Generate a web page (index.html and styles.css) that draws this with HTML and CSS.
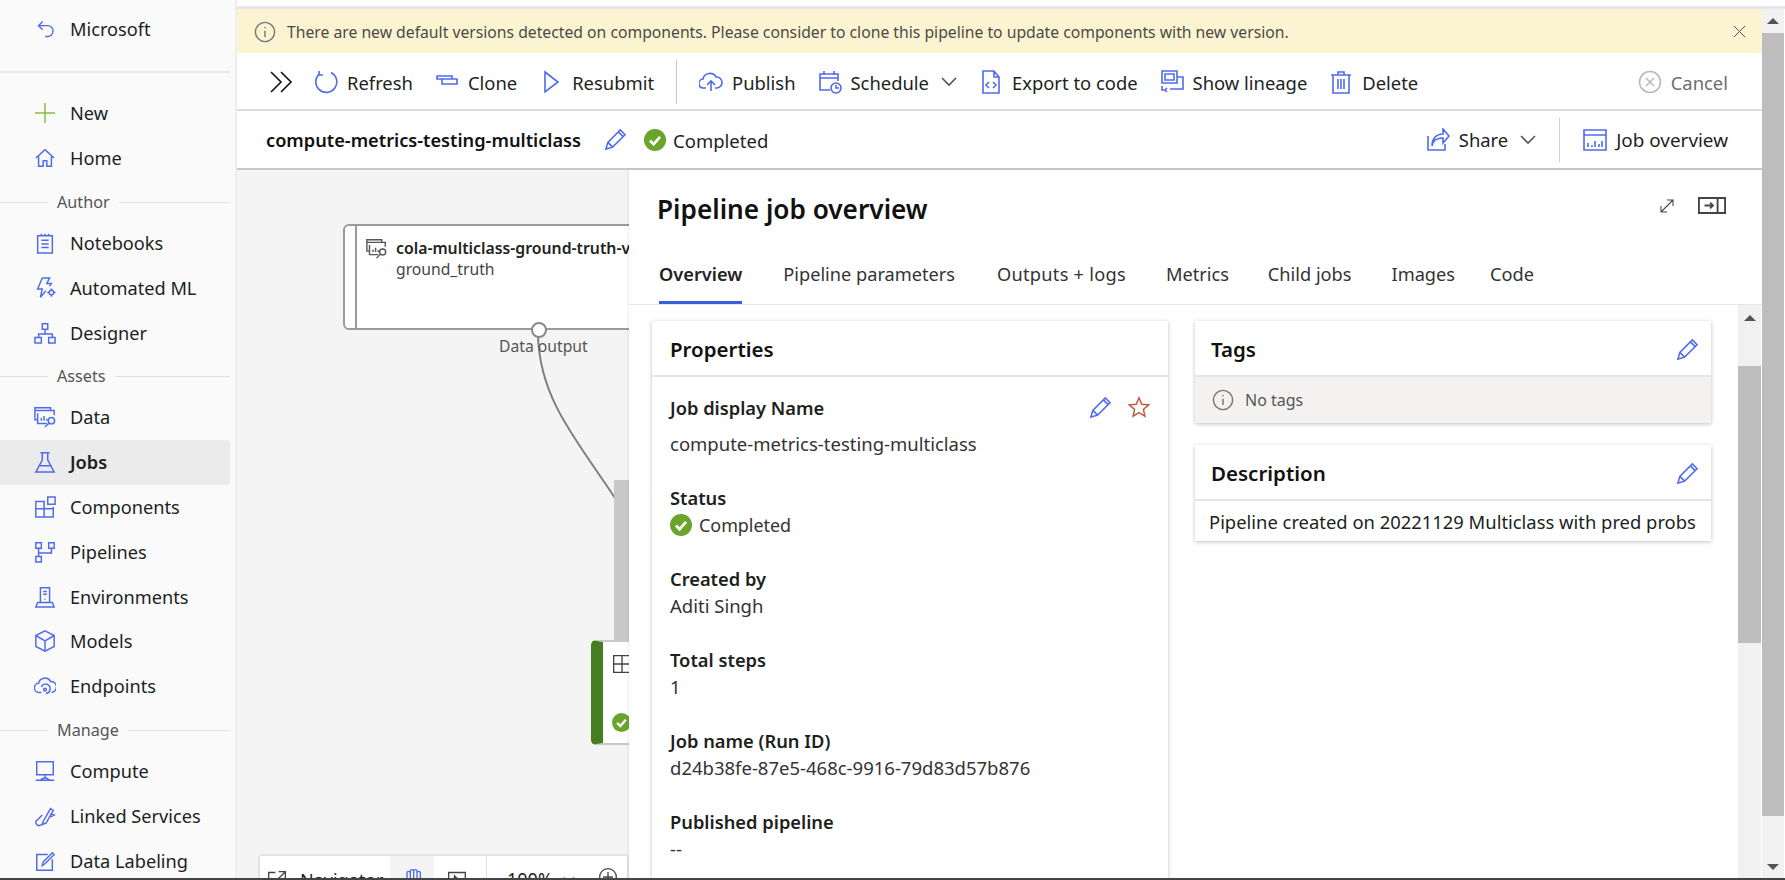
FILE: index.html
```html
<!DOCTYPE html>
<html lang="en">

<head>
    <meta charset="UTF-8" />
    <title>Pipeline job overview</title>
    <link rel="stylesheet" href="styles.css">
</head>

<body>
    <div class="app">
        <nav class="sidebar">
            <div class="nav-top">
                <svg class="nav-icon" viewBox="0 0 24 24"><path d="M8 3 3 8l5 5M3 8h11a6 6 0 0 1 0 13h-3"/></svg>
                <span>Microsoft</span>
            </div>
            <div class="nav-line"></div>
            <div class="nav-list">
                <div class="nav-item">
                    <svg class="nav-icon plus" viewBox="0 0 24 24"><path d="M12 1v22M1 12h22"/></svg>
                    <span>New</span>
                </div>
                <div class="nav-item">
                    <svg class="nav-icon" viewBox="0 0 24 24"><path d="M2 12 12 3l10 9M5 10v11h5v-6h4v6h5V10"/></svg>
                    <span>Home</span>
                </div>
                <div class="nav-head"><span>Author</span></div>
                <div class="nav-item">
                    <svg class="nav-icon" viewBox="0 0 24 24"><path d="M4 4h16v19H4zM8 2v2M12 2v2M16 2v2M8 9h8M8 13h8M8 17h8"/></svg>
                    <span>Notebooks</span>
                </div>
                <div class="nav-item">
                    <svg class="nav-icon" viewBox="0 0 24 24"><path d="M9 1h8l-3 6h5l-2 3M9 1 4 13h5l-2 9 6-7"/><circle cx="19" cy="17" r="2.500"/><path d="M19 12.500v2M19 19.500v2M14.500 17h2M21.500 17h2"/></svg>
                    <span>Automated ML</span>
                </div>
                <div class="nav-item">
                    <svg class="nav-icon" viewBox="0 0 24 24"><path d="M9 2h6v6H9zM1 17h7v6H1zM16 17h7v6h-7zM12 8v5M5 17v-4h15v4"/></svg>
                    <span>Designer</span>
                </div>
                <div class="nav-head"><span>Assets</span></div>
                <div class="nav-item">
                    <svg class="nav-icon" viewBox="0 0 24 24"><path d="M1 2h17v3H1zM1 5v10h3M4 5h18v5M4 8v11h10M8 16v-3M11 16v-5M14 16v-2"/><circle cx="19" cy="16" r="3.500"/><path d="m16 19-4 4"/></svg>
                    <span>Data</span>
                </div>
                <div class="nav-item active">
                    <svg class="nav-icon" viewBox="0 0 24 24"><path d="M7 2h10M9 2v8L2 23h20L15 10V2M6 16h12"/></svg>
                    <span>Jobs</span>
                </div>
                <div class="nav-item">
                    <svg class="nav-icon" viewBox="0 0 24 24"><path d="M2 6h9v17H2zM2 14h19v9h-10M11 6v8M21 14v-2M15 1h8v8h-8z"/></svg>
                    <span>Components</span>
                </div>
                <div class="nav-item">
                    <svg class="nav-icon" viewBox="0 0 24 24"><path d="M2 2h6v6H2zM16 2h6v6h-6zM2 17h6v6H2zM5 8v9M5 13h14V8"/></svg>
                    <span>Pipelines</span>
                </div>
                <div class="nav-item">
                    <svg class="nav-icon" viewBox="0 0 24 24"><path d="M7 2h10v16H7zM10 6h4M10 9h4M2 23l2-5h16l2 5zM12 14v1"/></svg>
                    <span>Environments</span>
                </div>
                <div class="nav-item">
                    <svg class="nav-icon" viewBox="0 0 24 24"><path d="m12 1 10 5v12l-10 5-10-5V6zM2 6l10 6 10-6M12 12v11"/></svg>
                    <span>Models</span>
                </div>
                <div class="nav-item">
                    <svg class="nav-icon" viewBox="0 0 24 24"><path d="M8 19H6a5 5 0 0 1-1-10 7 7 0 0 1 13-2 6 6 0 0 1 1 12M8 13a5 5 0 1 1 5 7"/><circle cx="12" cy="16" r="1.500"/></svg>
                    <span>Endpoints</span>
                </div>
                <div class="nav-head"><span>Manage</span></div>
                <div class="nav-item">
                    <svg class="nav-icon" viewBox="0 0 24 24"><path d="M3 2h18v14H3zM12 16v4M2 22h20M7 22l3-2h4l3 2"/></svg>
                    <span>Compute</span>
                </div>
                <div class="nav-item">
                    <svg class="nav-icon" viewBox="0 0 24 24"><path d="m10 18 8-14 3 2-8 14-4 1zM9 11l-5 5a3 3 0 0 0 3 6l3-1M18 9l4 2-4 2"/></svg>
                    <span>Linked Services</span>
                </div>
                <div class="nav-item">
                    <svg class="nav-icon" viewBox="0 0 24 24"><path d="M20 10v12H3V5h12M9 17l1-4 10-10 2 2-10 10z"/></svg>
                    <span>Data Labeling</span>
                </div>
            </div>
        </nav>

        <main class="main">
            <div class="top-gap"></div>
            <div class="page-row">
                <div class="page">
                    <div class="banner">
                        <svg class="banner-info" viewBox="0 0 24 24"><circle cx="12" cy="12" r="10.500"/><path d="M12 10.500v7M12 6.500v1.500"/></svg>
                        <span class="banner-text">There are new default versions detected on components. Please consider to clone this pipeline to update components with new version.</span>
                        <svg class="banner-close" viewBox="0 0 24 24"><path d="m3 3 18 18M21 3 3 21"/></svg>
                    </div>

                    <div class="toolbar">
                        <svg class="chevrons" viewBox="0 0 24 24"><path d="m2 2 10 10L2 22M12 2l10 10-10 10"/></svg>
                        <div class="cmd cmd-refresh">
                            <svg class="cmd-icon" viewBox="0 0 24 24"><path d="M6 3.500A10.500 10.500 0 1 0 17 2.500M5 1v4h4"/></svg>
                            <span>Refresh</span>
                        </div>
                        <div class="cmd">
                            <svg class="cmd-icon" viewBox="0 0 24 24"><path d="M2 6h15v3H2zM7 9v5h15V9h-5"/></svg>
                            <span>Clone</span>
                        </div>
                        <div class="cmd">
                            <svg class="cmd-icon" viewBox="0 0 24 24"><path d="m6 2 13 10L6 22z"/></svg>
                            <span>Resubmit</span>
                        </div>
                        <div class="toolbar-sep"></div>
                        <div class="cmd">
                            <svg class="cmd-icon" viewBox="0 0 24 24"><path d="M7 18H5a4.500 4.500 0 0 1-1-9 7 7 0 0 1 13-2 5.500 5.500 0 0 1 1 11h-2M12 21v-9M8 15l4-4 4 4"/></svg>
                            <span>Publish</span>
                        </div>
                        <div class="cmd">
                            <svg class="cmd-icon" viewBox="0 0 24 24"><path d="M12 20H2V4h18v7M2 8h18M6 1v4M16 1v4"/><circle cx="18" cy="18" r="5"/><path d="M18 15v3h3"/></svg>
                            <span>Schedule</span>
                            <svg class="caret" viewBox="0 0 16 10"><path d="m1 1 7 7 7-7"/></svg>
                        </div>
                        <div class="cmd">
                            <svg class="cmd-icon" viewBox="0 0 24 24"><path d="M4 1h11l5 6v16H4zM15 1v6h5M10 12l-3 3 3 3M14 12l3 3-3 3"/></svg>
                            <span>Export to code</span>
                        </div>
                        <div class="cmd">
                            <svg class="cmd-icon" viewBox="0 0 24 24"><path d="M2 1h15v12H2zM5 4h9v6H5zM17 7h6v12H10M2 16v4h3M7 18l-2 2 2 2"/></svg>
                            <span>Show lineage</span>
                        </div>
                        <div class="cmd">
                            <svg class="cmd-icon" viewBox="0 0 24 24"><path d="M4 5h16v18H4zM2 5h20M9 5V2h6v3M9 9v10M12 9v10M15 9v10"/></svg>
                            <span>Delete</span>
                        </div>
                        <div class="cmd cmd-cancel">
                            <svg class="cmd-icon" viewBox="0 0 24 24"><circle cx="12" cy="12" r="10.500"/><path d="m8 8 8 8M16 8l-8 8"/></svg>
                            <span>Cancel</span>
                        </div>
                    </div>

                    <div class="titlebar">
                        <span class="job-title">compute-metrics-testing-multiclass</span>
                        <svg class="pencil title-pencil" viewBox="0 0 24 24"><path d="m2 22 2-7L17 2l5 5L9 20zM4 15l5 5M15 4l5 5"/></svg>
                        <svg class="ok-icon" viewBox="0 0 24 24"><circle cx="12" cy="12" r="12"/><path d="m6.500 12.500 4 4 7-8"/></svg>
                        <span class="job-status">Completed</span>
                        <div class="cmd cmd-share">
                            <svg class="cmd-icon" viewBox="0 0 24 24"><path d="M2 8v14h17v-6M6 18c1-6 6-8 11-8v5l6-7-6-7v5C10 6 6 11 6 18z"/></svg>
                            <span>Share</span>
                            <svg class="caret" viewBox="0 0 16 10"><path d="m1 1 7 7 7-7"/></svg>
                        </div>
                        <div class="title-sep"></div>
                        <div class="cmd cmd-overview">
                            <svg class="cmd-icon" viewBox="0 0 24 24"><path d="M1 2h22v20H1zM1 7h22M5 19v-4M9 19v-2M12 19v-6M16 19v-3M19 19v-6"/></svg>
                            <span>Job overview</span>
                        </div>
                    </div>

                    <div class="workspace">
                        <div class="canvas">
                            <svg class="wire" viewBox="0 0 392 708"><path d="M301 166C303 230 340 270 378 328"/></svg>
                            <div class="node node-data">
                                <div class="node-strip"></div>
                                <svg class="node-icon" viewBox="0 0 24 24"><path d="M1 2h17v3H1zM1 5v10h3M4 5h18v5M4 8v11h10M8 16v-3M11 16v-5M14 16v-2"/><circle cx="19" cy="16" r="3.500"/><path d="m16 19-4 4"/></svg>
                                <div class="node-text">
                                    <div class="node-name">cola-multiclass-ground-truth-v</div>
                                    <div class="node-sub">ground_truth</div>
                                </div>
                            </div>
                            <div class="port"></div>
                            <div class="port-label">Data output</div>
                            <div class="drag-bar"></div>
                            <div class="node node-done">
                                <svg class="done-table" viewBox="0 0 24 24"><path d="M2 2h20v20H2zM12 2v20M2 12h20"/></svg>
                                <svg class="ok-icon done-ok" viewBox="0 0 24 24"><circle cx="12" cy="12" r="12"/><path d="m6.500 12.500 4 4 7-8"/></svg>
                            </div>
                            <div class="navigator">
                                <svg class="nav-tool dark" viewBox="0 0 24 24"><path d="M10 3H2v20h20v-8M14 2h8v8M22 2 10 14"/></svg>
                                <span class="nav-label">Navigator</span>
                                <div class="hand-box">
                                    <svg class="nav-tool blue" viewBox="0 0 24 24"><path d="m1 15 5 4V6a2 2 0 0 1 4 0V4a2 2 0 0 1 4 0 2 2 0 0 1 4 0v2a2 2 0 0 1 4 0v17M10 6v8M14 4v10M18 4v10"/></svg>
                                </div>
                                <svg class="nav-tool dark play" viewBox="0 0 24 24"><path d="M2 3h20v20H2zM9 7l7 7-7 4z"/></svg>
                                <div class="nav-divider"></div>
                                <span class="zoom-val">100%</span>
                                <svg class="caret zoom-caret" viewBox="0 0 16 10"><path d="m1 1 7 7 7-7"/></svg>
                                <svg class="nav-tool dark zoom-plus" viewBox="0 0 24 24"><circle cx="12" cy="12" r="10"/><path d="M12 6v12M6 12h12"/></svg>
                            </div>
                        </div>

                        <section class="panel">
                            <div class="panel-head">
                                <h2>Pipeline job overview</h2>
                                <svg class="head-btn expand" viewBox="0 0 24 24"><path d="M3 21 21 3M12 3h9v9M3 12v9h9"/></svg>
                                <svg class="head-btn dock" viewBox="0 0 30 18"><path d="M1 1h28v16H1zM21 1v16M7 9h9M13 6l3 3-3 3"/></svg>
                            </div>
                            <div class="tabs">
                                <div class="tab active">Overview</div>
                                <div class="tab">Pipeline parameters</div>
                                <div class="tab">Outputs + logs</div>
                                <div class="tab">Metrics</div>
                                <div class="tab">Child jobs</div>
                                <div class="tab">Images</div>
                                <div class="tab">Code</div>
                            </div>
                            <div class="panel-scroll">
                                <div class="columns">
                                    <div class="card card-props">
                                        <div class="card-head">Properties</div>
                                        <div class="props">
                                            <div class="prop prop-name">
                                                <div class="prop-actions">
                                                    <svg class="pencil" viewBox="0 0 24 24"><path d="m2 22 2-7L17 2l5 5L9 20zM4 15l5 5M15 4l5 5"/></svg>
                                                    <svg class="star" viewBox="0 0 24 24"><path d="m12 2 3 7 7.500.7-5.700 5 1.700 7.300-6.500-3.800L5.500 22l1.700-7.300-5.700-5L9 9z"/></svg>
                                                </div>
                                                <div class="prop-label">Job display Name</div>
                                                <div class="prop-value spaced">compute-metrics-testing-multiclass</div>
                                            </div>
                                            <div class="prop">
                                                <div class="prop-label">Status</div>
                                                <div class="prop-value status-row">
                                                    <svg class="ok-icon" viewBox="0 0 24 24"><circle cx="12" cy="12" r="12"/><path d="m6.500 12.500 4 4 7-8"/></svg>
                                                    <span>Completed</span>
                                                </div>
                                            </div>
                                            <div class="prop">
                                                <div class="prop-label">Created by</div>
                                                <div class="prop-value">Aditi Singh</div>
                                            </div>
                                            <div class="prop">
                                                <div class="prop-label">Total steps</div>
                                                <div class="prop-value">1</div>
                                            </div>
                                            <div class="prop">
                                                <div class="prop-label">Job name (Run ID)</div>
                                                <div class="prop-value">d24b38fe-87e5-468c-9916-79d83d57b876</div>
                                            </div>
                                            <div class="prop">
                                                <div class="prop-label">Published pipeline</div>
                                                <div class="prop-value">--</div>
                                            </div>
                                        </div>
                                    </div>
                                    <div class="side-cards">
                                        <div class="card">
                                            <div class="card-head">
                                                <span>Tags</span>
                                                <svg class="pencil" viewBox="0 0 24 24"><path d="m2 22 2-7L17 2l5 5L9 20zM4 15l5 5M15 4l5 5"/></svg>
                                            </div>
                                            <div class="no-tags">
                                                <svg viewBox="0 0 24 24"><circle cx="12" cy="12" r="10.500"/><path d="M12 10.500v7M12 6.500v1.500"/></svg>
                                                <span>No tags</span>
                                            </div>
                                        </div>
                                        <div class="card">
                                            <div class="card-head">
                                                <span>Description</span>
                                                <svg class="pencil" viewBox="0 0 24 24"><path d="m2 22 2-7L17 2l5 5L9 20zM4 15l5 5M15 4l5 5"/></svg>
                                            </div>
                                            <div class="desc">Pipeline created on 20221129 Multiclass with pred probs</div>
                                        </div>
                                    </div>
                                </div>
                                <div class="inner-bar">
                                    <div class="bar-btn"><i class="arrow"></i></div>
                                    <div class="bar-thumb"></div>
                                </div>
                            </div>
                        </section>
                    </div>
                </div>
                <div class="outer-bar">
                    <div class="bar-btn"><i class="arrow"></i></div>
                    <div class="bar-thumb"></div>
                    <div class="bar-btn bar-down"><i class="arrow down"></i></div>
                </div>
            </div>
        </main>
    </div>
    <div class="bottom-edge"></div>
</body>

</html>
```

FILE: styles.css
```css
:root {
    --azul: #4f6bed;
    --verde: #6ba42b;
    --texto: #201f1e;
    --linha: #e1e1e1;
}

* {
    box-sizing: border-box;
}

html,
body {
    height: 100%;
}

body {
    margin: 0;
    font-family: "Noto Sans", "Open Sans", sans-serif;
    color: var(--texto);
    background: #fff;
    overflow: hidden;
    display: flex;
    flex-direction: column;
}

svg {
    fill: none;
    stroke-width: 1.6;
    flex-shrink: 0;
}

.app {
    flex: 1;
    display: flex;
    min-height: 0;
}

.bottom-edge {
    height: 2px;
    background: #444;
}

/* sidebar */
.sidebar {
    width: 237px;
    flex-shrink: 0;
    background: #fafafa;
    border-right: 2px solid #eee;
    overflow: hidden;
    font-size: 18.200px;
}

.nav-top {
    height: 71px;
    padding: 7px 0 0 36px;
    display: flex;
    align-items: flex-start;
    gap: 14px;
    line-height: 44px;
}

.nav-top .nav-icon {
    margin-top: 11px;
    width: 20px;
    height: 22px;
}

.nav-line {
    height: 2px;
    background: #e8e8e8;
    margin-right: 5px;
}

.nav-list {
    padding-top: 18px;
}

.nav-item {
    height: 44.800px;
    margin-right: 5px;
    padding-left: 34px;
    display: flex;
    align-items: center;
    gap: 14px;
    white-space: nowrap;
}

.nav-item.active {
    background: #ebebeb;
    border-radius: 0 3px 3px 0;
    font-weight: 600;
}

.nav-icon {
    width: 22px;
    height: 22px;
    stroke: var(--azul);
}

.nav-icon.plus {
    stroke: #86bc3f;
}

.nav-head {
    height: 40px;
    padding-top: 3px;
    margin-right: 5px;
    display: flex;
    align-items: center;
    gap: 9px;
    font-size: 16.200px;
    color: #555;
}

.nav-head::before,
.nav-head::after {
    content: "";
    height: 1px;
    background: #e2e2e2;
}

.nav-head::before {
    width: 48px;
}

.nav-head::after {
    flex: 1;
}

/* main column */
.main {
    flex: 1;
    min-width: 0;
    display: flex;
    flex-direction: column;
}

.top-gap {
    height: 9px;
    flex-shrink: 0;
    padding-top: 6px;
    background: #fff;
    border-bottom: 3px solid #e6e6ec;
}

.page-row {
    flex: 1;
    display: flex;
    min-height: 0;
}

.page {
    flex: 1;
    min-width: 0;
    display: flex;
    flex-direction: column;
}

.banner {
    height: 44px;
    flex-shrink: 0;
    background: #fcf4d1;
    display: flex;
    align-items: center;
    padding: 1px 15px 0 17px;
    font-size: 15.720px;
    color: #4a4a48;
}

.banner-info {
    width: 22px;
    height: 22px;
    stroke: #777;
    margin-right: 11px;
}

.banner-text {
    flex: 1;
    white-space: nowrap;
}

.banner-close {
    width: 15px;
    height: 15px;
    stroke: #555;
}

.toolbar {
    height: 58px;
    flex-shrink: 0;
    border-bottom: 2px solid #dcdcdc;
    display: flex;
    align-items: center;
    padding: 2px 34px 0 32px;
}

.chevrons {
    width: 24px;
    height: 24px;
    stroke: #111;
    margin-right: 21px;
}

.cmd {
    display: flex;
    align-items: center;
    gap: 9px;
    margin-right: 22px;
    white-space: nowrap;
    font-size: 18.400px;
}

.cmd-icon {
    width: 24px;
    height: 24px;
    stroke: var(--azul);
}

.caret {
    width: 16px;
    height: 10px;
    stroke: #555;
    margin-left: 3px;
}

.toolbar-sep {
    width: 1px;
    height: 44px;
    background: #c8c8c8;
    margin: 0 22px 0 0;
}

.cmd-cancel {
    margin: 0 0 0 auto;
    color: #6e6e6e;
}

.cmd-cancel .cmd-icon {
    stroke: #bbb;
}

.titlebar {
    height: 59px;
    flex-shrink: 0;
    border-bottom: 2px solid #c8c8c8;
    display: flex;
    align-items: center;
    padding: 0 34px 0 29px;
}

.job-title {
    font-size: 18.200px;
    font-weight: 600;
    color: #111;
}

.title-pencil {
    margin-left: 23px;
}

.pencil {
    width: 23px;
    height: 23px;
    stroke: var(--azul);
}

.ok-icon {
    width: 22px;
    height: 22px;
    fill: var(--verde);
    stroke: none;
}

.ok-icon path {
    fill: none;
    stroke: #fff;
    stroke-width: 3;
}

.titlebar .ok-icon {
    margin-left: 17px;
}

.job-status {
    font-size: 18.500px;
    margin-left: 7px;
    padding-top: 1px;
}

.cmd-share {
    margin: 0 0 0 auto;
}

.title-sep {
    width: 1px;
    height: 44px;
    background: #d0d0d0;
    margin: 0 23px;
}

.cmd-overview {
    margin-right: 0;
    font-size: 18.900px;
}

/* canvas and panel */
.workspace {
    flex: 1;
    min-height: 0;
    display: flex;
}

.canvas {
    width: 392px;
    flex-shrink: 0;
    position: relative;
    overflow: hidden;
    background: #f4f4f4;
}

.wire {
    position: absolute;
    left: 0;
    top: 0;
    width: 392px;
    height: 708px;
    stroke: #808080;
    stroke-width: 2;
}

.node {
    position: absolute;
    background: #fff;
}

.node-data {
    left: 106px;
    top: 54px;
    width: 300px;
    height: 106px;
    border: 2px solid #9a9a9a;
    border-radius: 6px;
    display: flex;
}

.node-strip {
    width: 12px;
    flex-shrink: 0;
    border-right: 2px solid #9a9a9a;
}

.node-icon {
    width: 21px;
    height: 21px;
    stroke: #555;
    margin: 12px 9px 0 9px;
}

.node-text {
    padding-top: 12px;
}

.node-name {
    font-size: 15.800px;
    font-weight: 600;
    white-space: nowrap;
    color: #222;
    line-height: 21px;
}

.node-sub {
    font-size: 15.700px;
    color: #444;
    line-height: 21px;
}

.port {
    position: absolute;
    left: 294px;
    top: 152px;
    width: 16px;
    height: 16px;
    border-radius: 50%;
    background: #fff;
    border: 2px solid #888;
}

.port-label {
    position: absolute;
    left: 262px;
    top: 165px;
    font-size: 15.700px;
    color: #555;
    white-space: nowrap;
}

.drag-bar {
    position: absolute;
    left: 377px;
    top: 310px;
    width: 15px;
    height: 160px;
    background: #c8c8c8;
}

.node-done {
    left: 354px;
    top: 470px;
    width: 60px;
    height: 105px;
    border: 2px solid #c8c8c8;
    border-left: 12px solid #467c22;
    border-radius: 5px;
}

.done-table {
    position: absolute;
    left: 9px;
    top: 12px;
    width: 20px;
    height: 20px;
    stroke: #444;
}

.done-ok {
    position: absolute;
    left: 9px;
    top: 71px;
    width: 19px;
    height: 19px;
}

.navigator {
    position: absolute;
    left: 23px;
    top: 686px;
    width: 367px;
    height: 30px;
    background: #fff;
    box-shadow: 0 0 3px rgba(0, 0, 0, 0.25);
    display: flex;
    align-items: flex-start;
    padding: 0 0 0 7px;
    font-size: 18px;
}

.nav-tool {
    width: 20px;
    height: 20px;
    margin-top: 14px;
}

.nav-tool.dark {
    stroke: #444;
}

.nav-tool.blue {
    stroke: var(--azul);
    margin-top: 12px;
}

.nav-label {
    margin: 12px 0 0 13px;
    width: 90px;
}

.hand-box {
    width: 44px;
    height: 30px;
    background: #f4f4f4;
    display: flex;
    justify-content: center;
}

.nav-tool.play {
    margin-left: 13px;
}

.nav-divider {
    width: 1px;
    height: 30px;
    background: #e0e0e0;
    margin-left: 19px;
}

.zoom-val {
    margin: 11px 0 0 20px;
}

.zoom-caret {
    width: 12px;
    margin: 19px 0 0 10px;
    stroke: #999;
}

.nav-tool.zoom-plus {
    margin: 11px 0 0 23px;
}

.panel {
    flex: 1;
    min-width: 0;
    background: #fff;
    display: flex;
    flex-direction: column;
    position: relative;
    box-shadow: -1px 0 2px rgba(0, 0, 0, 0.08);
}

.panel-head {
    height: 68px;
    flex-shrink: 0;
    display: flex;
    align-items: center;
    padding: 0 36px 0 28px;
}

.panel-head h2 {
    margin: 10px auto 0 0;
    font-size: 26.200px;
    font-weight: 600;
    color: #111;
}

.head-btn {
    stroke: #444;
}

.head-btn.expand {
    width: 16px;
    height: 16px;
    margin: 3px 23px 0 0;
}

.head-btn.dock {
    width: 28px;
    height: 17px;
    margin-top: 2px;
    stroke-width: 2;
}

.tabs {
    height: 67px;
    flex-shrink: 0;
    display: flex;
    padding: 0 0 0 30px;
    gap: 40px;
    border-bottom: 1px solid #e6e6e6;
    font-size: 18.200px;
}

.tab {
    padding-top: 24px;
    height: 66px;
    white-space: nowrap;
    color: #333;
}

.tab.active {
    font-weight: 600;
    color: #222;
    border-bottom: 3px solid #3b5fdc;
}

.tab:nth-child(2) {
    margin-left: 1px;
}

.tab:nth-child(3) {
    margin-left: 2px;
    letter-spacing: 0.26px;
}

.tab:nth-child(5) {
    margin-left: -1px;
}

.tab:nth-child(7) {
    margin-left: -5px;
}

.panel-scroll {
    flex: 1;
    min-height: 0;
    display: flex;
}

.columns {
    flex: 1;
    min-width: 0;
    display: flex;
    gap: 27px;
    padding: 16px 27px 0 23px;
    overflow: hidden;
}

.card {
    background: #fff;
    box-shadow: 0 1px 4px rgba(0, 0, 0, 0.25);
}

.card-props {
    width: 516px;
    flex-shrink: 0;
    height: 600px;
}

.side-cards {
    flex: 1;
    display: flex;
    flex-direction: column;
    gap: 22px;
}

.card-head {
    height: 56px;
    padding: 2px 18px 0;
    border-bottom: 2px solid #e4e4e4;
    display: flex;
    align-items: center;
    justify-content: space-between;
    font-size: 20.500px;
    font-weight: 600;
    color: #111;
}

.side-cards .card-head {
    padding: 2px 12px 0 16px;
}

.props {
    padding: 18px 18px;
    font-size: 18.300px;
}

.prop {
    height: 81px;
    position: relative;
}

.prop-name {
    height: 90px;
}

.prop-label {
    font-weight: 600;
    line-height: 26px;
}

.prop-value {
    line-height: 26px;
    color: #333;
    font-size: 18.500px;
    margin-top: 1px;
}

.prop-value.spaced {
    margin-top: 10px;
}

.status-row {
    display: flex;
    align-items: center;
    gap: 7px;
    font-size: 17.900px;
}

.prop-actions {
    position: absolute;
    right: 0;
    top: 1px;
    display: flex;
    gap: 16px;
}

.star {
    width: 22px;
    height: 22px;
    stroke: #c0593a;
}

.no-tags {
    height: 46px;
    background: #f3f2f1;
    display: flex;
    align-items: center;
    gap: 11px;
    padding: 0 17px;
    font-size: 16px;
    color: #555;
}

.no-tags svg {
    width: 22px;
    height: 22px;
    stroke: #777;
}

.desc {
    height: 40px;
    padding: 0 14px;
    display: flex;
    align-items: center;
    font-size: 18.400px;
    white-space: nowrap;
}

/* scrollbars */
.inner-bar {
    width: 23px;
    flex-shrink: 0;
    margin-right: 1px;
    background: #f1f1f1;
}

.outer-bar {
    width: 23px;
    flex-shrink: 0;
    background: #f1f1f1;
    border-right: 1px solid #fff;
    display: flex;
    flex-direction: column;
}

.bar-btn {
    height: 24px;
    flex-shrink: 0;
    display: flex;
    justify-content: center;
    align-items: center;
}

.inner-bar .bar-btn {
    height: 61px;
    align-items: flex-start;
    padding-top: 10px;
}

.bar-down {
    margin-top: auto;
    height: 22px;
}

.arrow {
    width: 0;
    height: 0;
    border: 6px solid transparent;
    border-top: 0;
    border-bottom: 6px solid #555;
}

.arrow.down {
    border-bottom: 0;
    border-top: 6px solid #555;
}

.inner-bar .bar-thumb {
    height: 277px;
    background: #bdbdbd;
}

.outer-bar .bar-thumb {
    height: 783px;
    flex-shrink: 0;
    background: #bdbdbd;
}
```
